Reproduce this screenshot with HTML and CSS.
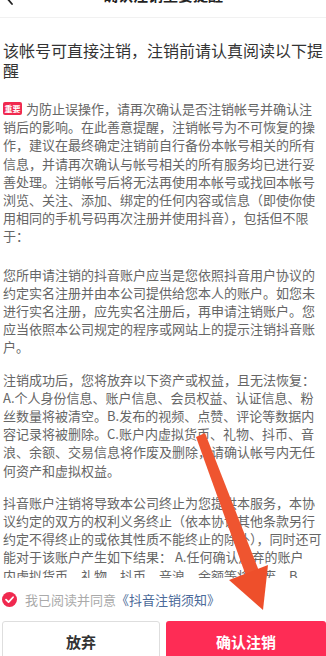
FILE: index.html
```html
<!DOCTYPE html>
<html lang="zh-CN">
<head>
<meta charset="utf-8">
<title>确认注销重要提醒</title>
<link rel="stylesheet" href="styles.css">
</head>
<body>
<header class="nav">
  <span class="back">
    <svg width="10" height="16" viewBox="0 0 10 16"><path d="M8 1 L2 8 L8 15" fill="none" stroke="#222" stroke-width="1.8" stroke-linecap="round" stroke-linejoin="round"/></svg>
  </span>
  <h1 class="title">确认注销重要提醒</h1>
</header>
<main class="content">
  <h2 class="heading">该帐号可直接注销，注销前请认真阅读以下提醒</h2>
  <p class="para para-first"><span class="badge">重要</span>为防止误操作，请再次确认是否注销帐号并确认注销后的影响。在此善意提醒，注销帐号为不可恢复的操作，建议在最终确定注销前自行备份本帐号相关的所有信息，并请再次确认与帐号相关的所有服务均已进行妥善处理。注销帐号后将无法再使用本帐号或找回本帐号浏览、关注、添加、绑定的任何内容或信息（即使你使用相同的手机号码再次注册并使用抖音），包括但不限于：</p>
  <p class="para">您所申请注销的抖音账户应当是您依照抖音用户协议的约定实名注册并由本公司提供给您本人的账户。如您未进行实名注册，应先实名注册后，再申请注销账户。您应当依照本公司规定的程序或网站上的提示注销抖音账户。</p>
  <p class="para">注销成功后，您将放弃以下资产或权益，且无法恢复：A.个人身份信息、账户信息、会员权益、认证信息、粉丝数量将被清空。B.发布的视频、点赞、评论等数据内容记录将被删除。C.账户内虚拟货币、礼物、抖币、音浪、余额、交易信息将作废及删除，请确认帐号内无任何资产和虚拟权益。</p>
  <p class="para">抖音账户注销将导致本公司终止为您提供本服务，本协议约定的双方的权利义务终止（依本协议其他条款另行约定不得终止的或依其性质不能终止的除外），同时还可能对于该账户产生如下结果： A.任何确认放弃的账户<br>内虚拟货币、礼物、抖币、音浪、余额等将作废，B.</p>
</main>
<footer class="footer">
  <div class="agree">
    <svg class="check" width="15" height="15" viewBox="0 0 16 16"><circle cx="8" cy="8" r="8" fill="#f0294f"/><path d="M4.3 8.2 L7 10.8 L11.8 5.6" fill="none" stroke="#fff" stroke-width="1.9" stroke-linecap="round" stroke-linejoin="round"/></svg>
    <span class="agree-text">我已阅读并同意</span>
    <span class="agree-link">《抖音注销须知》</span>
  </div>
  <div class="buttons">
    <button class="btn btn-cancel">放弃</button>
    <button class="btn btn-confirm">确认注销</button>
  </div>
</footer>
<svg class="arrow" width="326" height="656" viewBox="0 0 326 656">
  <polygon points="196,437 205,433 259,571 246,576" fill="#ef5530"/>
  <polygon points="229,580 268,565 263,610" fill="#ee4f2b"/>
</svg>
</body>
</html>
```

FILE: styles.css
```css
html, body {
  margin: 0;
  padding: 0;
  background: #fff;
}
body {
  width: 326px;
  height: 656px;
  overflow: hidden;
  font-family: "Noto Sans CJK SC", "Noto Sans", "Liberation Sans", sans-serif;
  color: #333;
}
.nav {
  height: 17px;
  border-bottom: 1px solid #f1f1f1;
  overflow: hidden;
  display: flex;
  justify-content: center;
  align-items: flex-end;
  position: relative;
}
.back {
  position: absolute;
  left: 4px;
  bottom: 12px;
  line-height: 0;
}
.title {
  margin: 0 0 13px 0;
  font-size: 15px;
  line-height: 18px;
  font-weight: 700;
  color: #222;
}
.content {
  padding: 0 2px 0 3px;
}
.heading {
  margin: 22px 0 0 0;
  font-size: 16px;
  line-height: 20px;
  font-weight: 400;
  color: #333;
}
.para {
  margin: 14px 0 0 0;
  font-size: 13px;
  line-height: 18.2px;
  color: #666;
}
.para-first {
  margin-top: 20px;
  margin-bottom: 20px;
}
.para-first + .para {
  margin-top: 20px;
}
.badge {
  display: inline-block;
  width: 19px;
  height: 13px;
  margin-right: 4px;
  border-radius: 2px;
  background: #f0294f;
  color: #fff;
  font-size: 8px;
  line-height: 13px;
  text-align: center;
  vertical-align: -1px;
  font-weight: 700;
  overflow: hidden;
}
.footer {
  position: fixed;
  left: 0;
  right: 0;
  bottom: -5px;
  height: 83px;
  background: #fff;
  display: flex;
  flex-direction: column;
}
.agree {
  height: 43px;
  display: flex;
  align-items: center;
  padding-left: 2px;
  font-size: 13px;
}
.check {
  margin-right: 8px;
}
.agree-text {
  color: #aaa;
}
.agree-link {
  color: #4b6a99;
}
.buttons {
  display: flex;
  gap: 6px;
  padding-left: 2px;
  height: 40px;
}
.btn {
  font-family: "Noto Sans CJK SC", "Noto Sans", sans-serif;
  font-size: 15px;
  font-weight: 700;
  border-radius: 3px;
  padding: 0;
  margin: 0;
}
.btn-cancel {
  width: 158px;
  background: #fff;
  border: 1px solid #dedede;
  color: #333;
}
.btn-confirm {
  flex: 1;
  background: #fe2c55;
  border: none;
  color: #fff;
}
.arrow {
  position: fixed;
  left: 0;
  top: 0;
  pointer-events: none;
}
```
